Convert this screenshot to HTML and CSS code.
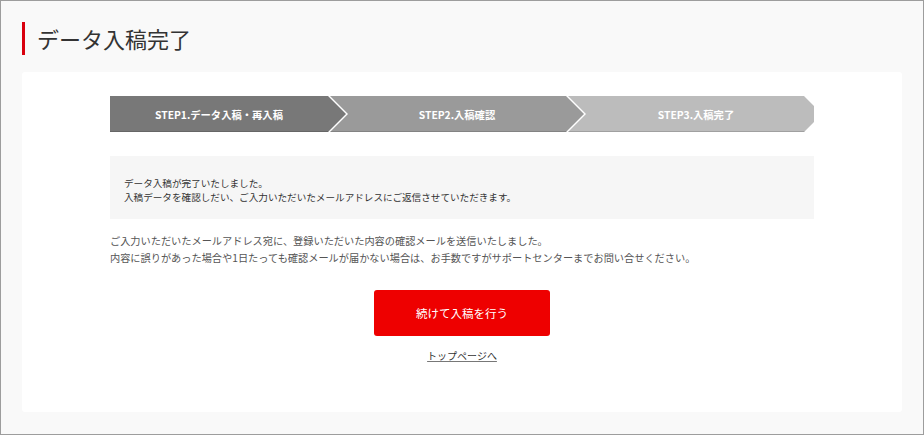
FILE: index.html
```html
<!DOCTYPE html>
<html lang="ja">
<head>
<meta charset="utf-8">
<title>データ入稿完了</title>
<link rel="stylesheet" href="styles.css">
</head>
<body>
<div class="page">
  <h1 class="page-title">データ入稿完了</h1>
  <div class="card">
    <ol class="steps">
      <li class="step step-1">STEP1.データ入稿・再入稿</li>
      <li class="step step-2">STEP2.入稿確認</li>
      <li class="step step-3">STEP3.入稿完了</li>
    </ol>
    <div class="notice">
      <p>データ入稿が完了いたしました。</p>
      <p>入稿データを確認しだい、ご入力いただいたメールアドレスにご返信させていただきます。</p>
    </div>
    <div class="message">
      <p>ご入力いただいたメールアドレス宛に、登録いただいた内容の確認メールを送信いたしました。</p>
      <p>内容に誤りがあった場合や1日たっても確認メールが届かない場合は、お手数ですがサポートセンターまでお問い合せください。</p>
    </div>
    <div class="actions">
      <a class="btn-primary" href="#">続けて入稿を行う</a>
      <a class="top-link" href="#">トップページへ</a>
    </div>
  </div>
</div>
</body>
</html>
```

FILE: styles.css
```css
* { box-sizing: border-box; }
html, body {
  margin: 0;
  padding: 0;
}
body {
  font-family: "Noto Sans CJK JP", "Noto Sans", sans-serif;
  color: #333;
}
.page {
  width: 924px;
  height: 435px;
  border: 1px solid #9d9d9d;
  background: #f9f9f9;
  padding: 21px 21px 0;
}
.page-title {
  margin: 0;
  height: 33px;
  line-height: 32px;
  border-left: 3px solid #d9000d;
  padding-left: 12px;
  font-size: 22px;
  font-weight: normal;
  color: #333;
}
.card {
  margin-top: 17px;
  background: #fff;
  border-radius: 3px;
  padding: 24px 88px 0;
  height: 340px;
}
.steps {
  list-style: none;
  margin: 0;
  padding: 0;
  display: flex;
  height: 36px;
}
.step {
  height: 36px;
  display: flex;
  align-items: center;
  justify-content: center;
  color: #fff;
  font-size: 10.3px;
  font-weight: bold;
  box-shadow: inset 0 -1px 0 rgba(0, 0, 0, 0.15);
}
.step-1 {
  width: 236px;
  padding-right: 18px;
  background: #787878;
  clip-path: polygon(0 0, calc(100% - 18px) 0, 100% 50%, calc(100% - 18px) 100%, 0 100%);
}
.step-2 {
  width: 254px;
  margin-left: -16px;
  background: #9a9a9a;
  clip-path: polygon(0 0, calc(100% - 18px) 0, 100% 50%, calc(100% - 18px) 100%, 0 100%, 18px 50%);
}
.step-3 {
  flex: 1;
  margin-left: -16px;
  padding-left: 10px;
  background: #bcbcbc;
  clip-path: polygon(0 0, calc(100% - 10px) 0, 100% 10px, 100% calc(100% - 10px), calc(100% - 10px) 100%, 0 100%, 18px 50%);
}
.notice {
  margin-top: 24px;
  background: #f6f6f6;
  padding: 20px 14px 15px;
  height: 63px;
  font-size: 9.6px;
  line-height: 14px;
  color: #333;
}
.notice p, .message p {
  margin: 0;
}
.message {
  margin-top: 13px;
  font-size: 10.2px;
  line-height: 17px;
  color: #555;
}
.actions {
  display: flex;
  flex-direction: column;
  align-items: center;
}
.btn-primary {
  margin-top: 24px;
  width: 176px;
  height: 46px;
  border-radius: 3px;
  background: #ee0000;
  color: #fff;
  font-size: 11.5px;
  text-decoration: none;
  display: flex;
  align-items: center;
  justify-content: center;
}
.top-link {
  margin-top: 12px;
  font-size: 10px;
  line-height: 16px;
  color: #333;
  text-decoration: underline;
  text-decoration-color: #777;
}
```
